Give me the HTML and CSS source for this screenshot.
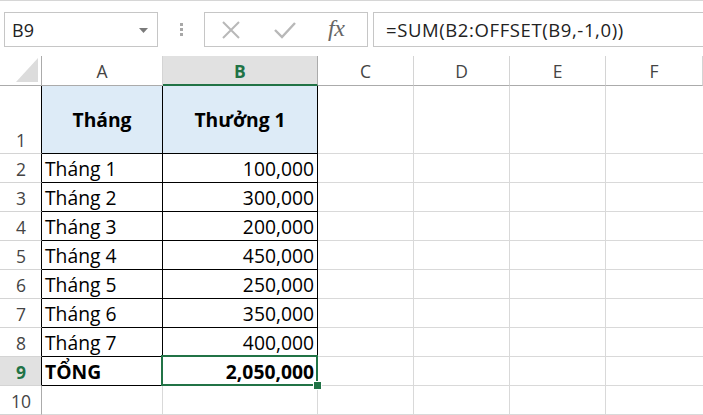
FILE: index.html
```html
<!DOCTYPE html>
<html>
<head>
<meta charset="utf-8">
<link rel="stylesheet" href="styles.css">
</head>
<body>
<div class="toolbar">
  <div class="namebox">
    <span class="name">B9</span>
    <svg class="caret" width="9" height="5" viewBox="0 0 9 5"><polygon points="0,0 9,0 4.5,5" fill="#7a7a7a"/></svg>
  </div>
  <div class="grip"><i></i><i></i><i></i></div>
  <div class="fbuttons">
    <svg class="ico" width="20" height="20" viewBox="0 0 20 20"><path d="M2 2 L18 18 M18 2 L2 18" stroke="#b8b8b8" stroke-width="2" fill="none"/></svg>
    <svg class="ico" width="22" height="20" viewBox="0 0 22 20"><path d="M1 10 L8 17 L21 3" stroke="#b8b8b8" stroke-width="2.4" fill="none"/></svg>
    <span class="fx">fx</span>
  </div>
  <div class="formula">=SUM(B2:OFFSET(B9,-1,0))</div>
</div>
<div class="sheet">
  <div class="corner"><svg width="22" height="24" viewBox="0 0 22 24"><polygon points="22,0 22,24 0,24" fill="#dcdcdc"/></svg></div>
  <div class="ch">A</div><div class="ch chsel">B</div><div class="ch">C</div><div class="ch">D</div><div class="ch">E</div><div class="ch last">F</div>

  <div class="rh tb">1</div><div class="c t hd">Tháng</div><div class="c t hd">Thưởng 1</div><div class="c"></div><div class="c"></div><div class="c"></div><div class="c last"></div>

  <div class="rh tb">2</div><div class="c t">Tháng 1</div><div class="c t num">100,000</div><div class="c"></div><div class="c"></div><div class="c"></div><div class="c last"></div>
  <div class="rh tb">3</div><div class="c t">Tháng 2</div><div class="c t num">300,000</div><div class="c"></div><div class="c"></div><div class="c"></div><div class="c last"></div>
  <div class="rh tb">4</div><div class="c t">Tháng 3</div><div class="c t num">200,000</div><div class="c"></div><div class="c"></div><div class="c"></div><div class="c last"></div>
  <div class="rh tb">5</div><div class="c t">Tháng 4</div><div class="c t num">450,000</div><div class="c"></div><div class="c"></div><div class="c"></div><div class="c last"></div>
  <div class="rh tb">6</div><div class="c t">Tháng 5</div><div class="c t num">250,000</div><div class="c"></div><div class="c"></div><div class="c"></div><div class="c last"></div>
  <div class="rh tb">7</div><div class="c t">Tháng 6</div><div class="c t num">350,000</div><div class="c"></div><div class="c"></div><div class="c"></div><div class="c last"></div>
  <div class="rh tb">8</div><div class="c t">Tháng 7</div><div class="c t num">400,000</div><div class="c"></div><div class="c"></div><div class="c"></div><div class="c last"></div>
  <div class="rh tb rhsel">9</div><div class="c t b">TỔNG</div><div class="c t num b sel">2,050,000</div><div class="c"></div><div class="c"></div><div class="c"></div><div class="c last"></div>
  <div class="rh">10</div><div class="c"></div><div class="c"></div><div class="c"></div><div class="c"></div><div class="c"></div><div class="c last"></div>
</div>
</body>
</html>
```
FILE: styles.css
```css
* { box-sizing: border-box; }
html, body { margin: 0; padding: 0; background: #fff; }
body { width: 703px; height: 415px; overflow: hidden; font-family: "Open Sans", "DejaVu Sans", sans-serif; }

.toolbar {
  height: 56px;
  border-top: 1px solid #d6d6d6;
  display: flex;
  align-items: flex-start;
  padding-top: 11px;
  padding-left: 4px;
}
.namebox {
  width: 154px; height: 35px;
  border: 1px solid #c6c6c6;
  display: flex; align-items: center; justify-content: space-between;
  padding: 0 9px 0 7px;
}
.name { font-size: 18px; color: #222; }
.caret { margin-top: 1px; }
.grip {
  width: 46px; height: 35px;
  display: flex; flex-direction: column; align-items: center; justify-content: center; gap: 2px;
}
.grip i { display: block; width: 3px; height: 3px; background: #a8a8a8; }
.fbuttons {
  width: 164px; height: 35px;
  border: 1px solid #c6c6c6;
  display: flex; align-items: center;
  padding-left: 16px; gap: 0;
}
.fbuttons .ico:nth-child(1) { margin-right: 33px; }
.fbuttons .ico:nth-child(2) { margin-right: 32px; }
.fx { font-family: "Liberation Serif", "DejaVu Serif", serif; font-style: italic; font-size: 24px; color: #666; letter-spacing: -0.5px; margin-top: -3px; }
.formula {
  margin-left: 5px;
  flex: 1; height: 35px;
  border: 1px solid #c6c6c6; border-right: none;
  display: flex; align-items: center;
  padding-left: 12px;
  font-size: 18.5px; letter-spacing: 0.6px; color: #222;
}

.sheet {
  display: grid;
  grid-template-columns: 42px 121px 155px 96px 96px 96px 97px;
  grid-template-rows: 30px 68px repeat(9, 29px);
}
.corner { border-right: 1px solid #ababab; border-bottom: 1px solid #ababab; display: flex; align-items: flex-end; justify-content: flex-end; padding: 0 3px 3px 0; }
.ch {
  border-right: 1px solid #d4d4d4; border-bottom: 1px solid #ababab;
  display: flex; align-items: center; justify-content: center;
  font-size: 17.5px; color: #444; padding-top: 1px;
}
.ch.chsel { background: #e1e1e1; color: #217346; font-weight: 700; border-bottom: 2px solid #217346; border-right-color: #ababab; }
.rh {
  border-right: 1px solid #ababab; border-bottom: 1px solid #d4d4d4;
  display: flex; align-items: flex-end; justify-content: center;
  font-size: 17.5px; color: #444; padding-bottom: 1px; padding-left: 1px;
}
.rh.tb { border-right-color: #000; }
.rh.rhsel { background: #e1e1e1; color: #217346; font-weight: 700; }
.c {
  border-right: 1px solid #d9d9d9; border-bottom: 1px solid #d9d9d9;
  display: flex; align-items: center;
  font-size: 19.3px; color: #000;
  padding: 0 3px 0 3px;
  white-space: nowrap;
}
.c.last { border-right: none; }
.c.t { border-right-color: #000; border-bottom-color: #000; }
.c.hd { background: #ddebf7; font-weight: 700; justify-content: center; }
.c.num { justify-content: flex-end; padding-right: 3px; }
.c.b { font-weight: 700; }
.sel { position: relative; }
.sel::before {
  content: ""; position: absolute;
  left: -2px; top: -2px; right: -1px; bottom: -1px;
  border: 2px solid #217346;
}
.sel::after {
  content: ""; position: absolute;
  right: -5px; bottom: -5px; width: 7px; height: 7px;
  background: #217346; border: 1px solid #fff;
}
```
